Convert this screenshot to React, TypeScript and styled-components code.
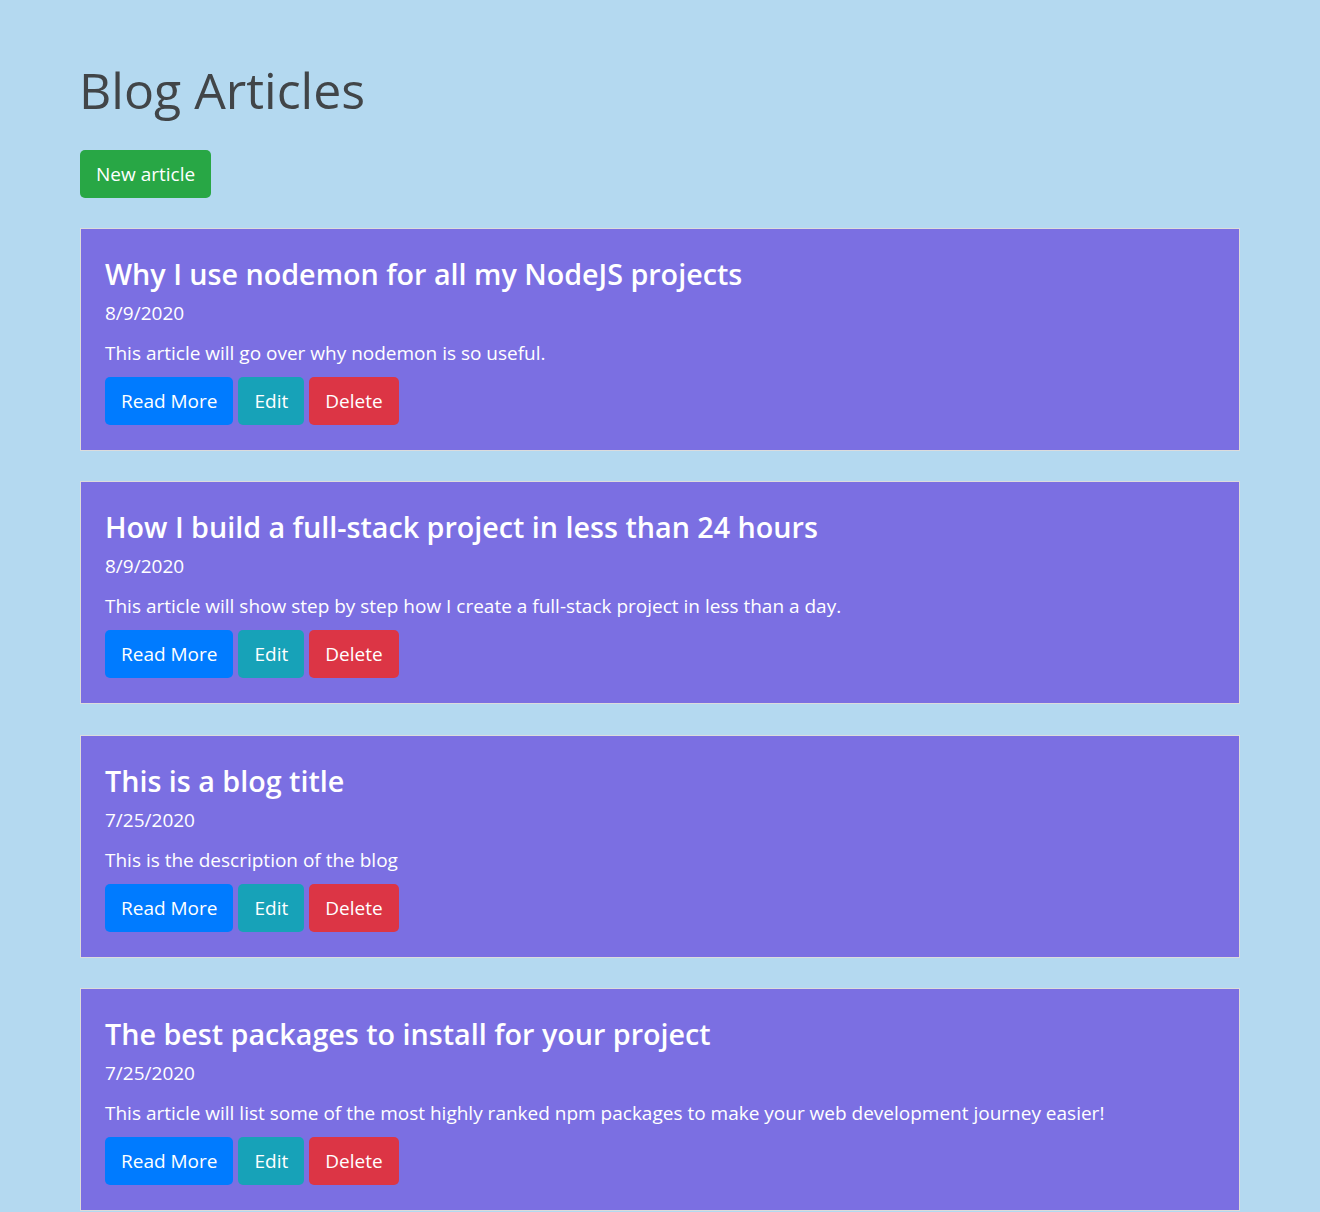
import React from "react";
import styled, { createGlobalStyle } from "styled-components";

const GlobalStyle = createGlobalStyle`
  html, body {
    margin: 0;
    padding: 0;
    background: #b4d9f0;
  }
  body {
    font-family: "Open Sans", "Noto Sans", "Liberation Sans", sans-serif;
    font-size: 20px;
    line-height: 1.5;
    color: #212529;
  }
  * { box-sizing: border-box; }
`;

const Container = styled.div`
  width: 1160px;
  margin: 0 auto;
  padding-top: 60px;
`;

const PageTitle = styled.h1`
  margin: 0 0 30px -1px;
  font-size: 50px;
  font-weight: 500;
  line-height: 60px;
  color: #414548;
`;

const Button = styled.button<{ $variant: "success" | "primary" | "info" | "danger" }>`
  display: inline-block;
  font-family: inherit;
  font-size: 19px;
  font-weight: 400;
  line-height: 30px;
  padding: 9px 16px;
  border: none;
  border-radius: 5px;
  color: #fff;
  cursor: pointer;
  background: ${({ $variant }) =>
    $variant === "success"
      ? "#28a745"
      : $variant === "primary"
      ? "#007bff"
      : $variant === "info"
      ? "#17a2b8"
      : "#dc3545"};
`;

const List = styled.div`
  display: flex;
  flex-direction: column;
  gap: 30.4px;
  margin-top: 30px;
`;

const Card = styled.div`
  background: #fff;
  border: 1px solid #dcdcdc;
`;

const CardBody = styled.div`
  background: #7b6fe2;
  padding: 26px 24px 25px 24px;
  color: #fff;
`;

const CardTitle = styled.h4`
  margin: 0 0 5px;
  font-size: 28.7px;
  font-weight: 600;
  line-height: 38px;
`;

const DateLine = styled.div`
  font-size: 19px;
  line-height: 30px;
  margin-bottom: 10px;
`;

const Description = styled.p`
  margin: 0 0 9px;
  font-size: 19px;
  line-height: 30px;
`;

const Actions = styled.div`
  display: flex;
  gap: 5px;
`;

const articles = [
  {
    title: "Why I use nodemon for all my NodeJS projects",
    date: "8/9/2020",
    description: "This article will go over why nodemon is so useful.",
  },
  {
    title: "How I build a full-stack project in less than 24 hours",
    date: "8/9/2020",
    description:
      "This article will show step by step how I create a full-stack project in less than a day.",
  },
  {
    title: "This is a blog title",
    date: "7/25/2020",
    description: "This is the description of the blog",
  },
  {
    title: "The best packages to install for your project",
    date: "7/25/2020",
    description:
      "This article will list some of the most highly ranked npm packages to make your web development journey easier!",
  },
];

export default function App() {
  return (
    <>
      <GlobalStyle />
      <Container>
        <PageTitle>Blog Articles</PageTitle>
        <Button $variant="success">New article</Button>
        <List>
          {articles.map((a) => (
            <Card key={a.title}>
              <CardBody>
                <CardTitle>{a.title}</CardTitle>
                <DateLine>{a.date}</DateLine>
                <Description>{a.description}</Description>
                <Actions>
                  <Button $variant="primary">Read More</Button>
                  <Button $variant="info">Edit</Button>
                  <Button $variant="danger">Delete</Button>
                </Actions>
              </CardBody>
            </Card>
          ))}
        </List>
      </Container>
    </>
  );
}
